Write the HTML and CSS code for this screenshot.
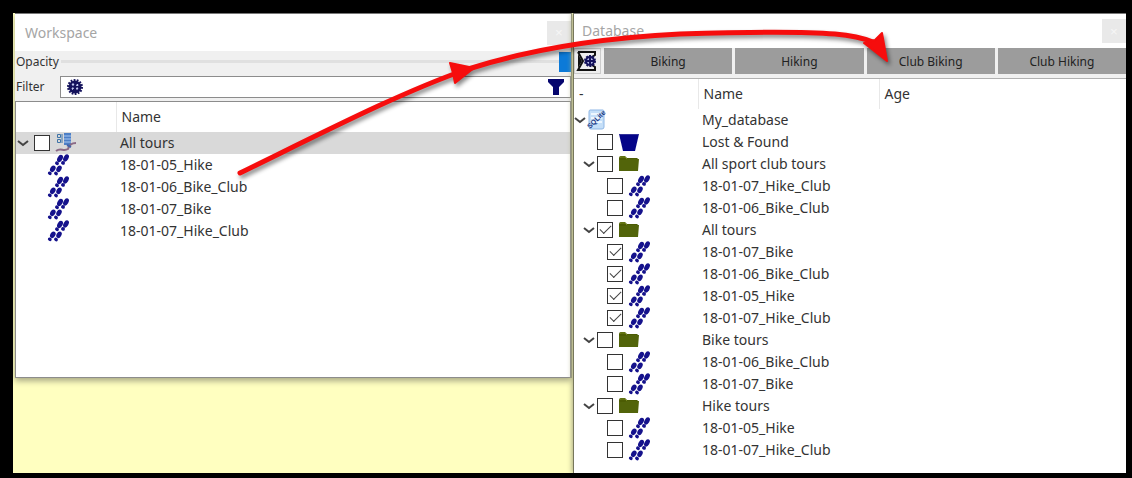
FILE: index.html
```html
<!DOCTYPE html>
<html lang="en">
<head>
<meta charset="utf-8">
<meta name="viewport" content="width=device-width, initial-scale=1">
<title>Workspace and Database</title>
<link rel="stylesheet" href="styles.css">
</head>
<body>
<svg class="sprite" aria-hidden="true">
  <symbol id="feet" viewBox="0 0 22 22">
    <g fill="#15128c">
      <ellipse cx="13" cy="4.500" rx="2.500" ry="3.900" transform="rotate(30 13 4.500)"/>
      <ellipse cx="19" cy="4" rx="2.400" ry="3.900" transform="rotate(30 19 4)"/>
      <ellipse cx="10" cy="9.200" rx="2" ry="1.800" transform="rotate(30 10 9.200)"/>
      <ellipse cx="16" cy="8.900" rx="2" ry="1.800" transform="rotate(30 16 8.900)"/>
      <ellipse cx="5.800" cy="14.800" rx="2.500" ry="3.500" transform="rotate(30 5.800 14.800)"/>
      <ellipse cx="12" cy="14.800" rx="2.400" ry="3.500" transform="rotate(30 12 14.800)"/>
      <ellipse cx="2.800" cy="19.300" rx="2" ry="1.700" transform="rotate(30 2.800 19.300)"/>
      <ellipse cx="9" cy="19.500" rx="2" ry="1.700" transform="rotate(30 9 19.500)"/>
    </g>
  </symbol>
  <symbol id="folder" viewBox="0 0 22 22">
    <path d="M1 5q0-2 2-2h4l2 2h10q1 0 1 2v11H1z" fill="#4c5c04"/>
    <path d="M1 7h6l2-1h12l-1 12H1z" fill="#52640a"/>
    <path d="M2 5q0-1 1-1h4l2 2" fill="none" stroke="#77881f"/>
  </symbol>
  <symbol id="bin" viewBox="0 0 22 22">
    <path d="M1 3h20l-4 17H5z" fill="#040488"/>
    <path d="M1 3.500h20" stroke="#33339a"/>
  </symbol>
  <symbol id="chevron" viewBox="0 0 12 12">
    <path d="M1 4l5 4 5-4" fill="none" stroke="#444" stroke-width="2"/>
  </symbol>
  <symbol id="gear" viewBox="0 0 18 18">
    <circle cx="9" cy="9" r="7" fill="none" stroke="#14125c" stroke-width="2" stroke-dasharray="1.800 1.340"/>
    <circle cx="9" cy="9" r="6.500" fill="#14125c"/>
    <path d="M7 5.500l1 1.500h-2zM11.500 6l.5 1.500h-1.500zM6 10h1.500l-1 1.500zM10.500 10h1.500l-1 1.500z" fill="#c8cff5" stroke="#c8cff5"/>
  </symbol>
</svg>

<main class="desktop">
  <section class="workspace">
    <header class="titlebar"><h2>Workspace</h2><button class="close" type="button" aria-label="Close workspace">×</button></header>
    <div class="opacity-row">
      <label for="opacity">Opacity</label>
      <input id="opacity" type="range" min="0" max="100" value="100">
    </div>
    <div class="filter-row">
      <label for="filter">Filter</label>
      <div class="filter-box">
        <svg class="gear"><use href="#gear"/></svg>
        <input id="filter" type="text">
        <svg class="funnel" viewBox="0 0 18 18"><path d="M1 1h16v3l-5 5v8H6V9L1 4z" fill="#06066e"/></svg>
      </div>
    </div>
    <div class="list">
      <table class="tree">
        <colgroup><col class="tree-col"><col></colgroup>
        <thead><tr><th></th><th class="split">Name</th></tr></thead>
        <tbody>
          <tr class="selected"><td><div class="node"><svg class="chevron"><use href="#chevron"/></svg><input type="checkbox" id="w0">
            <svg class="icon" viewBox="0 0 22 22"><path d="M9 1h7v12H9z" fill="#4d7fc6"/><path d="M9 4h7M9 7h7M9 10h7" stroke="#a9c8f0"/><path d="M2.500 2.500h3v3h-3zM2.500 7.500h3v3h-3z" fill="none" stroke="#3f74a8"/><path d="M7 2v9" stroke="#3f74a8"/><path d="M1 19c5-4 7 1 12-2 1-4 4-6 8-6" fill="none" stroke="#8b6a86" stroke-width="2"/><path d="M12 13l4 2" fill="none" stroke="#4464a8" stroke-width="2"/></svg></div></td><td><label for="w0">All tours</label></td></tr>
          <tr><td><div class="node child"><svg class="icon"><use href="#feet"/></svg></div></td><td>18-01-05_Hike</td></tr>
          <tr><td><div class="node child"><svg class="icon"><use href="#feet"/></svg></div></td><td>18-01-06_Bike_Club</td></tr>
          <tr><td><div class="node child"><svg class="icon"><use href="#feet"/></svg></div></td><td>18-01-07_Bike</td></tr>
          <tr><td><div class="node child"><svg class="icon"><use href="#feet"/></svg></div></td><td>18-01-07_Hike_Club</td></tr>
        </tbody>
      </table>
    </div>
  </section>

  <section class="database">
    <header class="titlebar"><h2>Database</h2><button class="close" type="button" aria-label="Close database">×</button></header>
    <nav class="toolbar">
      <button class="tool" type="button" aria-label="Filter setup"><svg viewBox="0 0 24 24"><path d="M3 3h17v3l-3 2M3 3l5 9-5 9h17v-3l-3-2" fill="none" stroke="#111" stroke-width="2"/><path d="M3 5v14l4-7z" fill="#111"/><circle cx="15" cy="12" r="4" fill="#b8bce6" stroke="#14125c" stroke-width="2"/><circle cx="15" cy="12" r="5" fill="none" stroke="#14125c" stroke-width="2" stroke-dasharray="2 1.140"/><path d="M15 8v8M11 12h8" stroke="#14125c" stroke-width="2"/></svg></button>
      <button class="tab" type="button">Biking</button>
      <button class="tab" type="button">Hiking</button>
      <button class="tab" type="button">Club Biking</button>
      <button class="tab" type="button">Club Hiking</button>
    </nav>
    <table class="tree">
      <colgroup><col class="tree-col"><col class="name-col"><col></colgroup>
      <thead><tr><th>-</th><th class="split">Name</th><th class="split">Age</th></tr></thead>
      <tbody>
        <tr><td><div class="node root"><svg class="chevron"><use href="#chevron"/></svg>
          <svg class="icon" viewBox="0 0 22 22"><path d="M4 1h13q1 0 1 2v15q0 2-2 2H5q-2 0-2-2V3q0-2 1-2z" fill="#c5dff8" stroke="#8fb7e6"/><path d="M5 5h10M5 9h11M5 13h11" stroke="#eef7ff" stroke-width="2"/><text x="4" y="20" transform="rotate(-45 4 20)" class="sql">SQLite</text></svg></div></td><td>My_database</td><td></td></tr>
        <tr><td><div class="node group leaf"><input type="checkbox" id="d1"><svg class="icon"><use href="#bin"/></svg></div></td><td><label for="d1">Lost &amp; Found</label></td><td></td></tr>
        <tr><td><div class="node group"><svg class="chevron"><use href="#chevron"/></svg><input type="checkbox" id="d2"><svg class="icon"><use href="#folder"/></svg></div></td><td><label for="d2">All sport club tours</label></td><td></td></tr>
        <tr><td><div class="node child"><input type="checkbox" id="d3"><svg class="icon"><use href="#feet"/></svg></div></td><td><label for="d3">18-01-07_Hike_Club</label></td><td></td></tr>
        <tr><td><div class="node child"><input type="checkbox" id="d4"><svg class="icon"><use href="#feet"/></svg></div></td><td><label for="d4">18-01-06_Bike_Club</label></td><td></td></tr>
        <tr><td><div class="node group"><svg class="chevron"><use href="#chevron"/></svg><input type="checkbox" id="d5" checked><svg class="icon"><use href="#folder"/></svg></div></td><td><label for="d5">All tours</label></td><td></td></tr>
        <tr><td><div class="node child"><input type="checkbox" id="d6" checked><svg class="icon"><use href="#feet"/></svg></div></td><td><label for="d6">18-01-07_Bike</label></td><td></td></tr>
        <tr><td><div class="node child"><input type="checkbox" id="d7" checked><svg class="icon"><use href="#feet"/></svg></div></td><td><label for="d7">18-01-06_Bike_Club</label></td><td></td></tr>
        <tr><td><div class="node child"><input type="checkbox" id="d8" checked><svg class="icon"><use href="#feet"/></svg></div></td><td><label for="d8">18-01-05_Hike</label></td><td></td></tr>
        <tr><td><div class="node child"><input type="checkbox" id="d9" checked><svg class="icon"><use href="#feet"/></svg></div></td><td><label for="d9">18-01-07_Hike_Club</label></td><td></td></tr>
        <tr><td><div class="node group"><svg class="chevron"><use href="#chevron"/></svg><input type="checkbox" id="d10"><svg class="icon"><use href="#folder"/></svg></div></td><td><label for="d10">Bike tours</label></td><td></td></tr>
        <tr><td><div class="node child"><input type="checkbox" id="d11"><svg class="icon"><use href="#feet"/></svg></div></td><td><label for="d11">18-01-06_Bike_Club</label></td><td></td></tr>
        <tr><td><div class="node child"><input type="checkbox" id="d12"><svg class="icon"><use href="#feet"/></svg></div></td><td><label for="d12">18-01-07_Bike</label></td><td></td></tr>
        <tr><td><div class="node group"><svg class="chevron"><use href="#chevron"/></svg><input type="checkbox" id="d13"><svg class="icon"><use href="#folder"/></svg></div></td><td><label for="d13">Hike tours</label></td><td></td></tr>
        <tr><td><div class="node child"><input type="checkbox" id="d14"><svg class="icon"><use href="#feet"/></svg></div></td><td><label for="d14">18-01-05_Hike</label></td><td></td></tr>
        <tr><td><div class="node child"><input type="checkbox" id="d15"><svg class="icon"><use href="#feet"/></svg></div></td><td><label for="d15">18-01-07_Hike_Club</label></td><td></td></tr>
      </tbody>
    </table>
  </section>
</main>

<svg class="arrow" viewBox="0 0 1132 478" aria-hidden="true">
  <path d="M240 173C330 129 400 93 465 70C530 49 600 38 680 34C740 32 800 31 835 34Q858 36 873 42" fill="none" stroke="#f60d0d" stroke-width="5" stroke-linecap="round"/>
  <path d="M450 63l24 5-19 15-2-10zM882 33l5 28-23-18 11-3z" fill="#f60d0d" stroke="#f60d0d" stroke-width="2" stroke-linejoin="round"/>
</svg>
</body>
</html>
```
FILE: styles.css
```css
* { box-sizing: border-box; }

body {
  margin: 0;
  min-height: 100vh;
  padding: 13px 6px 5px 13px;
  display: flex;
  position: relative;
  background: #000;
  color: #333;
  font: 14px/22px "Noto Sans", "Open Sans", sans-serif;
}

.sprite { position: absolute; width: 0; height: 0; }

.desktop {
  flex: 1;
  display: grid;
  grid-template-columns: 560fr 553fr;
  align-items: start;
  overflow: hidden;
  background: #ffffc0;
}

.workspace {
  margin-left: 2px;
  margin-right: 1px;
  background: #f0f0f0;
  border-top: 1px solid #777;
  border-right: 1px solid #8a8c78;
  box-shadow: 0 3px 6px #a9a985;
}

.database {
  align-self: stretch;
  background: #fff;
  border-top: 1px solid #777;
  border-left: 1px solid #77775c;
  box-shadow: -1px 0 5px #a9a985;
}

.titlebar {
  display: flex;
  align-items: center;
  justify-content: space-between;
  height: 37px;
  padding-left: 10px;
  background: #fff;
}

.database .titlebar { height: 34px; padding-left: 8px; }

h2 { margin: 0; font-size: 14px; font-weight: 400; color: #a5a5a5; }

.close {
  width: 24px;
  height: 24px;
  padding: 0;
  border: 0;
  background: #e9e9e9;
  color: #f6f6f6;
}

.opacity-row {
  display: flex;
  align-items: center;
  gap: 2px;
  height: 22px;
  padding-left: 1px;
  font-size: 12px;
}

#opacity {
  appearance: none;
  flex: 1;
  min-width: 0;
  height: 20px;
  margin: 0;
  background: transparent;
}

#opacity::-webkit-slider-runnable-track {
  height: 20px;
  background: linear-gradient(transparent 8px, #e0e0e0 8px, #e0e0e0 11px, transparent 11px);
}

#opacity::-webkit-slider-thumb {
  appearance: none;
  width: 12px;
  height: 20px;
  background: #0c7ad8;
}

.filter-row {
  display: flex;
  align-items: center;
  gap: 16px;
  padding: 3px 0 3px 1px;
  font-size: 12px;
}

.filter-box {
  flex: 1;
  display: flex;
  align-items: center;
  height: 22px;
  padding: 0 5px;
  background: #fff;
  border: 1px solid #8c8c8c;
}

#filter { flex: 1; min-width: 0; height: 18px; padding: 0 8px; border: 0; outline: 0; }

.gear, .funnel { width: 18px; height: 18px; }

.list {
  min-height: 277px;
  background: #fff;
  border: 1px solid #8c8c8c;
}

.tree { width: 100%; table-layout: fixed; border-collapse: collapse; }
.tree-col { width: 100px; }
.database .tree-col { width: 124px; }
.name-col { width: 181px; }
th { height: 30px; padding: 0 5px; font-weight: 400; text-align: left; }
.split { border-left: 1px solid #e8e8e8; }
td { height: 22px; padding: 0 4px; }
td:first-child { padding: 0; }
.selected { background: #d9d9d9; }

.node { display: flex; align-items: center; gap: 5px; height: 22px; padding-left: 1px; }
.database .node { padding-left: 0; }
.database .node.root { gap: 0; }
.workspace .node.child { padding-left: 31px; }
.database .node.group { padding-left: 9px; }
.database .node.leaf { padding-left: 23px; }
.database .node.child { padding-left: 33px; }
.chevron { width: 12px; height: 12px; flex: none; }
.group .chevron { margin-right: -3px; }
.icon { width: 22px; height: 22px; flex: none; overflow: visible; }
.sql { font: bold 7px "Liberation Sans", sans-serif; fill: #1b3a86; }

input[type="checkbox"] {
  appearance: none;
  flex: none;
  display: grid;
  place-items: center;
  width: 16px;
  height: 16px;
  margin: 0;
  background: #fff;
  border: 1px solid #333;
}

input[type="checkbox"]:checked::after {
  content: "";
  width: 10px;
  height: 5px;
  margin-bottom: 4px;
  border: solid #444;
  border-width: 0 0 1px 1px;
  transform: rotate(-45deg);
}

.toolbar {
  display: grid;
  grid-template-columns: 27px repeat(4, 1fr);
  gap: 3px;
  height: 31px;
  padding-bottom: 4px;
  background: #f0f0f0;
  border-bottom: 1px solid #b0b0b0;
}

.tool { padding: 0; border: 1px solid #ccc; background: #eee; }
.tool svg { display: block; width: 24px; height: 24px; }

.tab {
  padding: 2px 0 0;
  border: 0;
  background: #9c9c9c;
  color: #222;
  font: 12px/20px "Noto Sans", "Open Sans", sans-serif;
}

.arrow {
  position: absolute;
  top: 0;
  left: 0;
  width: 100%;
  pointer-events: none;
  filter: drop-shadow(2px 3px 2px #0007);
}
```
